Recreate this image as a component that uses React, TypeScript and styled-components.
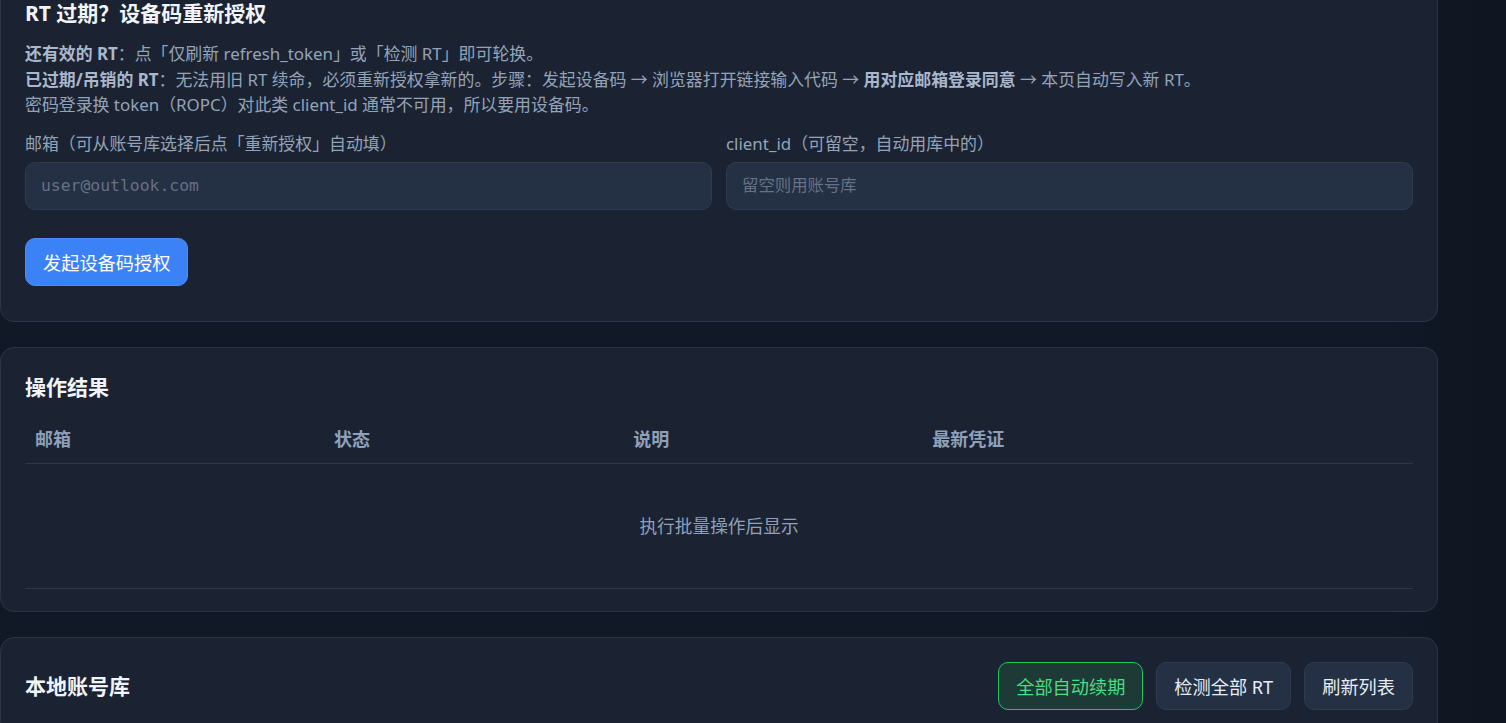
import React from "react";
import styled, { createGlobalStyle } from "styled-components";

const GlobalStyle = createGlobalStyle`
  html, body {
    margin: 0;
    padding: 0;
    background: #111826;
    overflow: hidden;
  }
  body {
    font-family: "Noto Sans", "Noto Sans CJK SC", sans-serif;
    color: #e2e8f0;
  }
  * { box-sizing: border-box; }
`;

const Page = styled.div`
  width: 1506px;
  height: 723px;
  overflow: hidden;
  background: linear-gradient(90deg, #111826 0%, #111826 92%, #0f1621 100%);
`;

const Stack = styled.main`
  width: 1438px;
  display: flex;
  flex-direction: column;
  gap: 25px;
  margin-top: -24px;
`;

const Card = styled.section<{ $padBottom?: number }>`
  background: #1b2333;
  border: 1px solid #2a3547;
  border-radius: 14px;
  padding: 24px 24px ${(p) => p.$padBottom ?? 24}px 24px;
`;

const Title = styled.h2`
  margin: 0;
  font-size: 21px;
  line-height: 24px;
  font-weight: 700;
  color: #f1f5f9;
`;

const Notes = styled.p`
  margin: 16px 0 0;
  font-size: 16.9px;
  line-height: 25.5px;
  color: #94a3b8;
`;

const Strong = styled.b`
  font-weight: 700;
  color: #a9b8cd;
`;

const FieldGrid = styled.div`
  display: grid;
  grid-template-columns: 1fr 1fr;
  gap: 14px;
  margin-top: 15px;
`;

const Field = styled.label`
  display: flex;
  flex-direction: column;
  gap: 7px;
`;

const FieldLabel = styled.span`
  font-size: 16.9px;
  line-height: 22px;
  color: #94a3b8;
`;

const Input = styled.input`
  height: 48px;
  width: 100%;
  padding: 0 15px;
  background: #243044;
  border: 1px solid #2e3a4f;
  border-radius: 10px;
  color: #e2e8f0;
  font-family: "DejaVu Sans Mono", "Noto Sans CJK SC", monospace;
  font-size: 16.4px;
  outline: none;
  &::placeholder {
    color: #667185;
  }
`;

const ActionRow = styled.div`
  display: flex;
  margin-top: 28px;
`;

const Button = styled.button<{ $tone?: "primary" | "success" | "neutral" }>`
  height: 48px;
  padding: 0 17px;
  border-radius: 10px;
  font-family: "Noto Sans", "Noto Sans CJK SC", sans-serif;
  font-size: 18.2px;
  cursor: pointer;
  white-space: nowrap;
  ${(p) =>
    p.$tone === "primary"
      ? `background: #3b82f6; border: 1px solid #4b8ef7; color: #ffffff;`
      : p.$tone === "success"
      ? `background: #1e3a36; border: 1px solid #22c55e; color: #4ade80;`
      : `background: #243044; border: 1px solid #2e3a4f; color: #e8edf5;`}
`;

const ResultTitle = styled(Title)`
  margin: 3px 0 16px;
`;

const Table = styled.table`
  width: 100%;
  border-collapse: collapse;
  table-layout: fixed;
`;

const Th = styled.th`
  text-align: left;
  padding: 12px 10px;
  font-size: 18px;
  line-height: 24px;
  font-weight: 700;
  color: #8fa0ba;
  border-bottom: 1px solid #2c384b;
`;

const EmptyCell = styled.td`
  text-align: center;
  padding: 50px 10px;
  font-size: 17.7px;
  line-height: 24px;
  color: #8fa0ba;
  border-bottom: 1px solid #2c384b;
`;

const LibraryHeader = styled.div`
  display: flex;
  align-items: center;
  justify-content: space-between;
`;

const ButtonGroup = styled.div`
  display: flex;
  gap: 13px;
`;

export default function App() {
  return (
    <Page>
      <GlobalStyle />
      <Stack>
        <Card $padBottom={35}>
          <Title>RT 过期？设备码重新授权</Title>
          <Notes>
            <Strong>还有效的 RT</Strong>：点「仅刷新 refresh_token」或「检测 RT」即可轮换。
            <br />
            <Strong>已过期/吊销的 RT</Strong>：无法用旧 RT 续命，必须重新授权拿新的。步骤：发起设备码 → 浏览器打开链接输入代码 →{" "}
            <Strong>用对应邮箱登录同意</Strong> → 本页自动写入新 RT。
            <br />
            密码登录换 token（ROPC）对此类 client_id 通常不可用，所以要用设备码。
          </Notes>
          <FieldGrid>
            <Field>
              <FieldLabel>邮箱（可从账号库选择后点「重新授权」自动填）</FieldLabel>
              <Input placeholder="user@outlook.com" />
            </Field>
            <Field>
              <FieldLabel>client_id（可留空，自动用库中的）</FieldLabel>
              <Input placeholder="留空则用账号库" />
            </Field>
          </FieldGrid>
          <ActionRow>
            <Button $tone="primary">发起设备码授权</Button>
          </ActionRow>
        </Card>

        <Card $padBottom={22}>
          <ResultTitle>操作结果</ResultTitle>
          <Table>
            <colgroup>
              <col style={{ width: "21.55%" }} />
              <col style={{ width: "21.55%" }} />
              <col style={{ width: "21.55%" }} />
              <col style={{ width: "21.55%" }} />
              <col />
            </colgroup>
            <thead>
              <tr>
                <Th>邮箱</Th>
                <Th>状态</Th>
                <Th>说明</Th>
                <Th>最新凭证</Th>
                <Th />
              </tr>
            </thead>
            <tbody>
              <tr>
                <EmptyCell colSpan={5}>执行批量操作后显示</EmptyCell>
              </tr>
            </tbody>
          </Table>
        </Card>

        <Card>
          <LibraryHeader>
            <Title>本地账号库</Title>
            <ButtonGroup>
              <Button $tone="success">全部自动续期</Button>
              <Button>检测全部 RT</Button>
              <Button>刷新列表</Button>
            </ButtonGroup>
          </LibraryHeader>
        </Card>
      </Stack>
    </Page>
  );
}
